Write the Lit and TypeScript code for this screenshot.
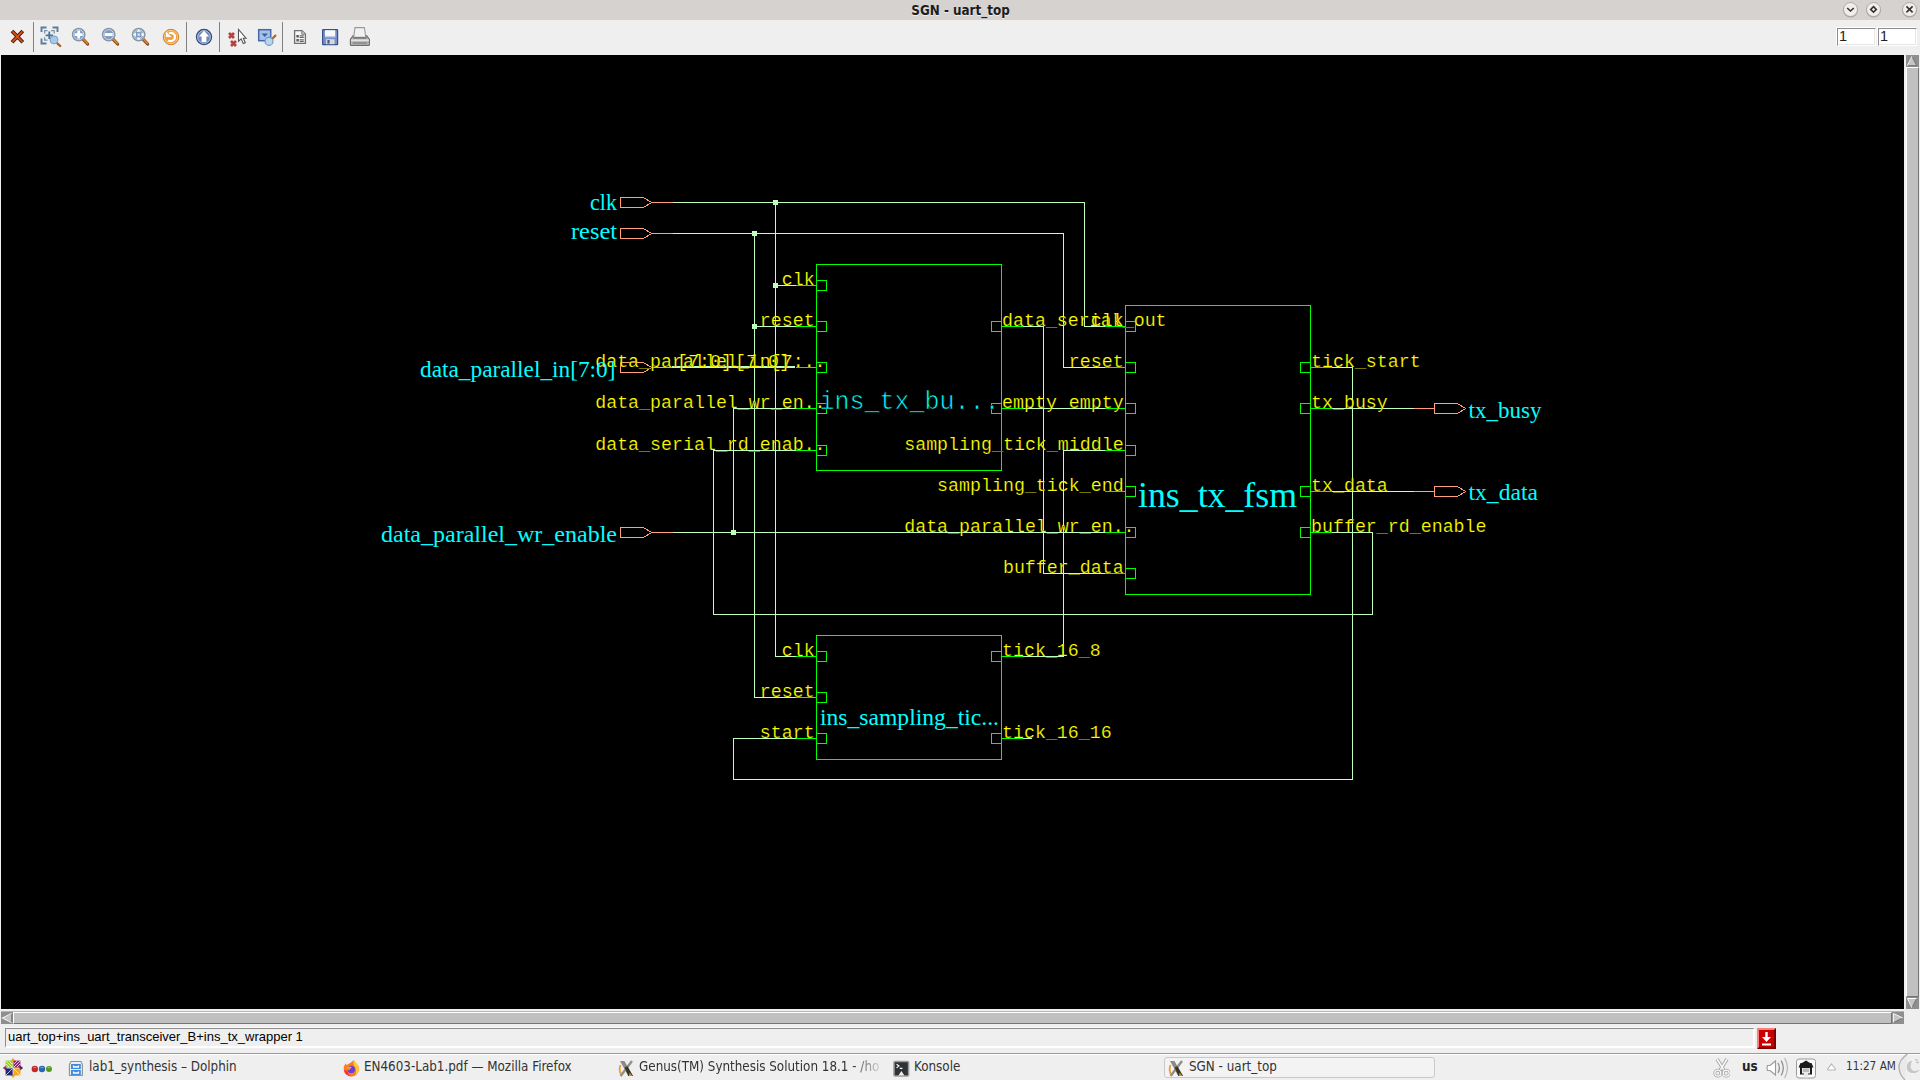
import { LitElement, html, svg, css } from "lit";
import { customElement, property } from "lit/decorators.js";

type Pt = [number, number];
type Side = "start" | "end";

interface Block {
  x: number;
  y: number;
  w: number;
  h: number;
  left: Array<[number, string]>;
  right: Array<[number, string]>;
}

const PITCH = 10.97;
const RIGHT_TRIM = 1.4;

const blocks: Block[] = [
  {
    x: 816, y: 264, w: 185, h: 206,
    left: [[285, "clk"], [326, "reset"], [367, "data_parallel_in[7:.."], [408, "data_parallel_wr_en.."], [450, "data_serial_rd_enab.."]],
    right: [[326, "data_serial_out"], [408, "empty"]],
  },
  {
    x: 1125, y: 305, w: 185, h: 289,
    left: [[326, "clk"], [367, "reset"], [408, "empty"], [450, "sampling_tick_middle"], [491, "sampling_tick_end"], [532, "data_parallel_wr_en.."], [573, "buffer_data"]],
    right: [[367, "tick_start"], [408, "tx_busy"], [491, "tx_data"], [532, "buffer_rd_enable"]],
  },
  {
    x: 816, y: 635, w: 185, h: 124,
    left: [[656, "clk"], [697, "reset"], [738, "start"]],
    right: [[656, "tick_16_8"], [738, "tick_16_16"]],
  },
];

const nets: Pt[][] = [
  [[672, 202], [1084, 202], [1084, 326], [1104, 326]],
  [[672, 233], [1063, 233], [1063, 367], [1104, 367]],
  [[775, 202], [775, 656], [795, 656]],
  [[775, 285], [795, 285]],
  [[754, 233], [754, 697], [795, 697]],
  [[754, 326], [795, 326]],
  [[672, 532], [1104, 532]],
  [[733, 532], [733, 408], [795, 408]],
  [[1022, 326], [1043, 326], [1043, 573], [1104, 573]],
  [[1022, 408], [1104, 408]],
  [[1022, 656], [1063, 656], [1063, 450], [1104, 450]],
  [[1022, 738], [1031, 738]],
  [[1331, 367], [1352, 367], [1352, 779], [733, 779], [733, 738], [795, 738]],
  [[1331, 532], [1372, 532], [1372, 614], [713, 614], [713, 450], [795, 450]],
  [[1331, 408], [1413, 408]],
  [[1331, 491], [1413, 491]],
];

const junctions: Pt[] = [[775, 202], [754, 233], [775, 285], [754, 326], [733, 532]];

const inPorts = [202, 233, 367, 532];
const outPorts = [408, 491];

/** Port and instance names: text, left edge, baseline, drawn width, size. */
const names: Array<[string, number, number, number, number]> = [
  ["clk", 590, 210, 27, 22.5],
  ["reset", 571, 239, 46, 22.5],
  ["data_parallel_in[7:0]", 420, 377, 195.5, 22.5],
  ["data_parallel_wr_enable", 381, 542, 236, 22.5],
  ["tx_busy", 1468.5, 418, 73, 22.5],
  ["tx_data", 1468.5, 500, 69.5, 22.5],
  ["ins_tx_fsm", 1138, 507, 159, 36],
  ["ins_sampling_tic...", 820, 725, 179, 22.5],
];

@customElement("schematic-view")
export class SchematicView extends LitElement {
  static styles = css`
    :host { display: block; width: 1903px; height: 954px; background: #000; }
    svg { display: block; }
    .line { fill: none; stroke-width: 1; shape-rendering: crispEdges; }
    .net { stroke: #beffbe; }
    .pin { stroke: #00ff00; }
    .port { stroke: #ffa07a; }
    .dot { fill: #beffbe; shape-rendering: crispEdges; }
    .label { fill: #ffff00; stroke: #000; stroke-width: 0.2px; font: 18.25px "Liberation Mono", "Courier New", monospace; }
    .name { fill: #00ffff; font-family: "Liberation Serif", "Times New Roman", serif; }
    .mono { fill: #00ffff; stroke: #000; stroke-width: 0.65px; font: 25px "Liberation Mono", "Courier New", monospace; }
  `;

  private path(points: Pt[]) {
    return points.map(([x, y]) => `${x + 0.5},${y + 0.5}`).join(" ");
  }

  private label(text: string, x: number, y: number, side: Side) {
    const shown = Math.min(text.length, 20) * PITCH;
    const left = side === "start" ? x : x - shown;
    return svg`<text class="label" x=${left} y=${y - 0.4} textLength=${text.length * PITCH}>${text}</text>`;
  }

  private block(b: Block) {
    const r = b.x + b.w;
    return svg`
      <rect class="line pin" x=${b.x + 0.5} y=${b.y + 0.5} width=${b.w} height=${b.h}/>
      ${b.left.map(([y]) => svg`
        <polyline class="line pin" points=${this.path([[b.x - 21, y], [b.x, y]])}/>
        <rect class="line pin" x=${b.x + 0.5} y=${y - 4.5} width="10" height="10"/>`)}
      ${b.right.map(([y]) => svg`
        <polyline class="line pin" points=${this.path([[r, y], [r + 21, y]])}/>
        <rect class="line pin" x=${r - 9.5} y=${y - 4.5} width="10" height="10"/>`)}`;
  }

  private blockLabels(b: Block) {
    return svg`
      ${b.left.map(([y, t]) => this.label(t, b.x - RIGHT_TRIM, y, "end"))}
      ${b.right.map(([y, t]) => this.label(t, b.x + b.w + 1, y, "start"))}`;
  }

  private port(x: number, y: number) {
    return svg`<polygon class="line port" points=${this.path([[x, y - 5], [x + 23, y - 5], [x + 31, y], [x + 23, y + 5], [x, y + 5]])}/>`;
  }

  render() {
    return html`<svg width="1903" height="954" viewBox="1 55 1903 954">
      ${inPorts.map((y) => svg`${this.port(620, y)}<polyline class="line port" points=${this.path([[651, y], [672, y]])}/>`)}
      ${outPorts.map((y) => svg`${this.port(1434, y)}<polyline class="line port" points=${this.path([[1413, y], [1434, y]])}/>`)}
      ${blocks.map((b) => this.block(b))}
      <text class="mono" x="819.5" y="408.5" textLength="180">ins_tx_bu...</text>
      ${nets.map((n) => svg`<polyline class="line net" points=${this.path(n)}/>`)}
      <rect class="dot" x="672" y="366" width="123" height="2"/>
      ${junctions.map(([x, y]) => svg`<rect class="dot" x=${x - 2} y=${y - 2} width="5" height="5"/>`)}
      ${blocks.map((b) => this.blockLabels(b))}
      ${this.label("[7:0]", 677, 367, "start")}
      ${this.label("[7:0]", 735, 367, "start")}
      ${names.map(([t, x, y, w, s]) => svg`<text class="name" x=${x} y=${y + 0.2} font-size=${s} textLength=${w} lengthAdjust="spacingAndGlyphs">${t}</text>`)}
    </svg>`;
  }
}

const lens = svg`
  <path d="M13.2 13.4L17.6 18" stroke="#8a4513" stroke-width="3.2" stroke-linecap="round"/>
  <path d="M13.4 13.2L17.4 17.4" stroke="#e08a2c" stroke-width="1.5" stroke-linecap="round"/>
  <circle cx="8.7" cy="8.6" r="6.2" fill="#7d9cc0" stroke="#8793a1" stroke-width="1.4"/>
  <circle cx="8.7" cy="8.6" r="5" fill="none" stroke="#c9d9ea" stroke-width="1"/>`;

const icons: Record<string, unknown> = {
  close: svg`
    <path d="M5 5L15.8 16.2M15.8 5L5 16.2" stroke="#4f1c04" stroke-width="3.8"/>
    <path d="M5.4 5.4L15.4 15.8M15.4 5.4L5.4 15.8" stroke="#d8501a" stroke-width="1.8"/>`,
  fit: svg`
    <path d="M1.5 6V1.5H6.5M12.5 1.5H17.5V6M1.5 12.5V17.5H6.5" fill="none" stroke="#5c7d99" stroke-width="1.9"/>
    <path d="M4.6 7.6V4.6H7.6M11 4.6H14.2V7.6M4.6 11.2V14.2H7.6" fill="none" stroke="#7a97ae" stroke-width="1.3"/>
    <path d="M9.3 5.5V13M5.6 9.3H13" stroke="#4b7396" stroke-width="1.8"/>
    <path d="M16.8 16.8L20.2 20" stroke="#a8662a" stroke-width="2.4" stroke-linecap="round"/>
    <circle cx="14" cy="13.9" r="4" fill="#a5c9ec" stroke="#7ba0c4"/>`,
  zoomIn: svg`${lens}<path d="M8.7 4.6V12.6M4.7 8.6H12.7" stroke="#fff" stroke-width="2.8"/>`,
  zoomOut: svg`${lens}<path d="M4.7 8.6H12.7" stroke="#fff" stroke-width="3"/>`,
  zoomFull: svg`${lens}
    <path d="M8.7 3.2L11 5.8H6.4ZM8.7 14L6.4 11.4H11ZM3.3 8.6L5.9 6.3V10.9ZM14.1 8.6L11.5 6.3V10.9Z" fill="#fff"/>
    <rect x="7.5" y="7.4" width="2.4" height="2.4" fill="#dbe7f3"/>`,
  redraw: svg`
    <circle cx="11" cy="11" r="7.7" fill="#f3a040" stroke="#cf8226" stroke-width="1"/>
    <circle cx="11" cy="11" r="6.7" fill="none" stroke="#f9d29c" stroke-width=".8"/>
    <path d="M9 7.2C12.4 6 15.4 8.2 15 11.4C14.6 14.8 11 16.2 8 14.4" fill="none" stroke="#fff" stroke-width="2.2"/>
    <path d="M6 5.6V11H11.4Z" fill="#fff"/>`,
  up: svg`
    <circle cx="11" cy="11" r="7.5" fill="#7088b8" stroke="#344c82" stroke-width="1.4"/>
    <circle cx="11" cy="11" r="6.4" fill="none" stroke="#bccae2" stroke-width=".9"/>
    <path d="M11 4.8L16.2 10.6H13.4V16H8.6V10.6H5.8Z" fill="#fff"/>`,
  deselect: svg`
    <path d="M3 7L8 12M8 7L3 12M5 15L10 20M10 15L5 20" stroke="#b8403f" stroke-width="2.7"/>
    <path d="M12.5 3.5V15.2L15.2 12.8L17.3 17.6L19.3 16.8L17.3 12.2H20Z" fill="#fff" stroke="#555" stroke-width="1.1"/>`,
  region: svg`
    <rect x="2.7" y="3.7" width="12" height="11" fill="#a7c1e8" stroke="#4468ac" stroke-width="1.5"/>
    <path d="M5.5 7.5L8.8 11L12 7.5Z" fill="#3560a8"/>
    <path d="M16 13L19.4 9.6" stroke="#b9651b" stroke-width="2.2" stroke-linecap="round"/>
    <circle cx="13" cy="15.4" r="4" fill="#b6d5f1" stroke="#6f95be" stroke-width="1.1"/>`,
  report: svg`
    <path d="M5.6 4.6H13L16.4 8V17.4H5.6Z" fill="#f7f7f7" stroke="#6f6f6f" stroke-width="1.3"/>
    <path d="M12.8 4.6V8.2H16.4" fill="#ccc" stroke="#777" stroke-width="1"/>
    <path d="M7.4 10.3H9.8M7.4 14.3H9.8" stroke="#555" stroke-width="2.6"/>
    <path d="M10.6 9.7H14.8M10.6 11.4H14.8M10.6 13.7H14.8M10.6 15.4H14.8" stroke="#666" stroke-width="1.1"/>`,
  save: svg`
    <rect x="3.6" y="3.6" width="15" height="15" rx=".6" fill="#7791c8" stroke="#384f8e" stroke-width="1.2"/>
    <rect x="6" y="4.2" width="10.2" height="7" fill="#f6f8fc"/>
    <path d="M6 10.6H16.2" stroke="#b7c3df" stroke-width="1"/>
    <rect x="7" y="13.2" width="8.6" height="5" fill="#d6d8dc"/>
    <rect x="8.4" y="14" width="2.2" height="3.6" fill="#405894"/>`,
  print: svg`
    <path d="M4.2 9.6H17.6L20.4 13.4V18.4Q20.4 19.4 19.4 19.4H2.4Q1.4 19.4 1.4 18.4V13.4Z" fill="#bdbdbd" stroke="#6f6f6f" stroke-width="1.2"/>
    <path d="M6 1.6H15.4L16.8 11.4H4.6Z" fill="#f1f1f1" stroke="#9a9a9a" stroke-width="1.1"/>
    <path d="M4.2 12H17.6" stroke="#666" stroke-width="1.2"/>
    <path d="M2 14.2H20" stroke="#f4f4f4" stroke-width="1"/>
    <path d="M3.6 17H18.2" stroke="#808080" stroke-width="1.4"/>`,
};

const toolGroups: string[][] = [
  ["close"],
  ["fit", "zoomIn", "zoomOut", "zoomFull", "redraw"],
  ["up"],
  ["deselect", "region"],
  ["report", "save", "print"],
];

@customElement("tool-bar")
export class ToolBar extends LitElement {
  static styles = css`
    :host { display: flex; align-items: flex-start; height: 35px; background: #efefef; }
    .group { display: flex; gap: 8px; padding: 6px 4px 0 6px; }
    .group.first { padding-left: 7px; }
    .sep { width: 1px; height: 30px; margin-top: 2px; background: #828282; }
    .space { flex: 1; }
    .fields { display: flex; gap: 2px; padding: 8px 3px 0 0; }
    .field {
      box-sizing: border-box; width: 39px; height: 18px; background: #fff; color: #222;
      border: 1px solid #fff; border-top-color: #8d8d8d; border-left-color: #8d8d8d; box-shadow: -1px -1px #fff, inset -1px -1px #e6e6e6;
      padding-left: 1px; font: 14.5px/14px "Liberation Sans", Arial, sans-serif;
    }
  `;

  render() {
    return html`
      ${toolGroups.map((g, i) => html`
        ${i ? html`<div class="sep"></div>` : ""}
        <div class="group ${i ? "" : "first"}">
          ${g.map((n) => html`<svg width="22" height="22" viewBox="0 0 22 22" fill="none">${icons[n]}</svg>`)}
        </div>`)}
      <div class="space"></div>
      <div class="fields"><div class="field">1</div><div class="field">1</div></div>`;
  }
}

@customElement("title-bar")
export class TitleBar extends LitElement {
  static styles = css`
    :host {
      display: grid; grid-template-columns: 1fr auto 1fr; height: 20px; background: #d6d2cf;
      font: bold 13.3px/21px "DejaVu Sans Condensed", "DejaVu Sans", sans-serif; font-stretch: condensed; color: #1d1d1d;
    }
    .title { grid-column: 2; padding-left: 1px; text-shadow: 0 1px #eee; }
    .buttons { display: flex; justify-content: flex-end; padding: 1px 2px 0 0; }
    .gap { width: 19px; }
    .first { margin-right: 6px; }
  `;

  private button(mark: string, cls = "") {
    return html`<svg class=${cls} width="17" height="18" viewBox="0 0 17 18">
      <circle cx="8.5" cy="9.3" r="7.3" fill="#aaa7a5"/>
      <circle cx="8.5" cy="8.5" r="7" fill="#efeeed" stroke="#a19e9c" stroke-width=".8"/>
      <path d=${mark} fill="none" stroke="#333" stroke-width="1.6"/>
    </svg>`;
  }

  render() {
    return html`<div class="title">SGN - uart_top</div>
      <div class="buttons">
        ${this.button("M5.2 7L8.5 10L11.8 7", "first")}
        ${this.button("M8.5 5.6L11.3 8.4L8.5 11.2L5.7 8.4Z")}
        <div class="gap"></div>
        ${this.button("M5.4 5.4L11.6 11.4M11.6 5.4L5.4 11.4")}
      </div>`;
  }
}

@customElement("scroll-bar")
export class ScrollBar extends LitElement {
  @property({ reflect: true }) axis: "x" | "y" = "x";

  static styles = css`
    :host { display: flex; box-sizing: border-box; background: #8f8f8f; }
    :host([axis="y"]) { flex-direction: column; width: 13px; height: 954px; }
    :host([axis="x"]) { width: 1903px; height: 13px; border-top: 1px solid #b5b5b5; }
    .thumb {
      flex: 1; background: #c0c0c0; box-sizing: border-box;
      border: 1px solid #fff; border-right-color: #757575; border-bottom-color: #757575;
    }
    svg { display: block; flex: none; }
  `;

  render() {
    const arrow = (first: boolean) => {
      const turn = this.axis === "x" ? (first ? -90 : 90) : first ? 0 : 180;
      const lit = this.axis === "x" ? (first ? "M1.5 11.5L6.5 1.5L11.5 11.5" : "M1.5 11.5H11.5M1.5 11.5L6.5 1.5") : first ? "M1.5 11.5L6.5 1.5" : "M11.5 11.5H1.5M11.5 11.5L6.5 1.5";
      return html`<svg width="12" height="12" viewBox="0 0 13 13">
        <g transform="rotate(${turn} 6.5 6.5)">
          <path d="M6.5 1.5L11.5 11.5H1.5Z" fill="#c4c4c4" stroke="#666" stroke-width=".8"/>
          <path d=${lit} fill="none" stroke="#fff" stroke-width="1.1"/>
        </g></svg>`;
    };
    return html`${arrow(true)}<div class="thumb"></div>${arrow(false)}`;
  }
}

const xLogo = svg`
  <path d="M2.5 5C1 9 1.6 13 4 15.4" fill="none" stroke="#f49a2a" stroke-width="1.8"/>
  <path d="M14 1L2.6 16" stroke="#8f8f8f" stroke-width="2.4"/>
  <path d="M2 1H6.4L15 16H10.4Z" fill="#8d8a86"/>
  <path d="M6.6 7.4L9.4 6.2L15 16H10.4Z" fill="#39341f"/>
  <path d="M11.5 12.5L14.4 16H11Z" fill="#c99a2a"/>`;

const appIcons: Record<string, unknown> = {
  files: svg`
    <path d="M3 1.5H13L14.4 4.5V15.5H1.4V4.5Z" fill="#eceff1" stroke="#8c9195" stroke-width="1.1"/>
    <rect x="3" y="4" width="9.8" height="5" fill="#3d8ade"/><rect x="3" y="10" width="9.8" height="5" fill="#3d8ade"/>
    <path d="M5.6 5.4V7H10.4V5.4M5.6 11.4V13H10.4V11.4" fill="none" stroke="#fff" stroke-width="1.4"/>`,
  firefox: svg`
    <path d="M8 2.6Q9.2 .8 11 .2Q11.4 2 13.6 3.8Q16.6 6.8 15.8 10.4Q14.4 16 8.6 16.4Q2.4 16.4 .8 10.6Q.2 6.4 2.4 3.6L3.6 5Z" fill="#ff7a1f"/>
    <path d="M11 .2Q11.4 2 13.6 3.8Q16.6 6.8 15.8 10.4Q14.8 13.6 12.4 15Q14.2 9 11.2 6Q9.4 3 11 .2Z" fill="#ffcb2e"/>
    <path d="M1 10Q2 16 8.6 16.4Q5 15 4.4 11Z" fill="#f2304c"/>
    <circle cx="8.3" cy="9.4" r="3.7" fill="#6a3fd0"/>
    <path d="M3.4 7.2Q6.8 5.6 9 8Q6.6 8 6.4 10.2Q4 9.8 3.4 7.2Z" fill="#ff9a2a"/>`,
  x: xLogo,
  konsole: svg`
    <rect x="1" y="1.4" width="14.6" height="14.6" rx="1" fill="#2e3234" stroke="#9a9a9a" stroke-width="1.5"/>
    <path d="M3.6 4.2L6 6L3.6 7.8M6.8 8.4H9.4" fill="none" stroke="#fff" stroke-width="1.1"/>
    <path d="M5.4 15.4L8.4 11L11.4 15.4Z" fill="#eee"/>`,
};

const tasks = [
  { icon: "files", label: "lab1_synthesis – Dolphin", width: 275, state: "" },
  { icon: "firefox", label: "EN4603-Lab1.pdf — Mozilla Firefox", width: 275, state: "" },
  { icon: "x", label: "Genus(TM) Synthesis Solution 18.1 - /ho", width: 275, state: "faded" },
  { icon: "konsole", label: "Konsole", width: 275, state: "" },
  { icon: "x", label: "SGN - uart_top", width: 271, state: "active" },
];

@customElement("task-bar")
export class TaskBar extends LitElement {
  static styles = css`
    :host {
      display: flex; align-items: flex-start; box-sizing: border-box; height: 27px; border-top: 1px solid #9a9c9a;
      box-shadow: inset 0 1px #fff; background: #efefef; color: #333; overflow: hidden;
      font: 13.3px/20px "DejaVu Sans Condensed", "DejaVu Sans", sans-serif; font-stretch: condensed;
    }
    svg { display: block; flex: none; }
    .launch { display: flex; width: 64px; gap: 7px; padding: 4px 0 0 3px; box-sizing: border-box; }
    .task { display: flex; gap: 4px; height: 21px; box-sizing: border-box; margin-top: 3px; padding: 1px 0 0 4px; line-height: 18px; white-space: nowrap; }
    .task svg { margin-top: 2px; }
    .active { border: 1px solid #c9c9c9; border-radius: 3px; background: #f3f3f3; padding: 0 0 0 3px; }
    .faded .text { -webkit-mask-image: linear-gradient(90deg, #000 212px, transparent 246px); mask-image: linear-gradient(90deg, #000 212px, transparent 246px); }
    .tray { display: flex; margin-left: auto; height: 26px; align-items: center; }
    .scissors { margin-right: 3px; }
    .layout { font-weight: bold; font-size: 13.4px; line-height: 24px; padding: 0 4px 0 9px; width: 18px; color: #222; }
    .clock { width: 52px; padding-left: 8px; font-size: 11.7px; line-height: 25px; height: 26px; white-space: nowrap; }
  `;

  render() {
    return html`
      <div class="launch">
        <svg width="20" height="20" viewBox="0 0 20 20">
          <path d="M10 0L13 3.6H7ZM20 10L16.4 13V7ZM10 20L7 16.4H13ZM0 10L3.6 7V13Z" fill="#efa724"/>
          <path d="M0 10L3.6 7V13Z" fill="#932279"/><path d="M20 10L16.4 13V7Z" fill="#262577"/>
          <rect x="2.6" y="2.6" width="7" height="7" fill="#9ccd2a"/><rect x="10.4" y="2.6" width="7" height="7" fill="#932279"/>
          <rect x="2.6" y="10.4" width="7" height="7" fill="#262577"/><rect x="10.4" y="10.4" width="7" height="7" fill="#efa724"/>
          <path d="M3 3L9 9M17 3L11 9M3 17L9 11M17 17L11 11M6 3L9 6M3 6L6 9M14 3L11 6M17 6L14 9" stroke="#fff" stroke-width=".7"/>
        </svg>
        <svg width="22" height="20" viewBox="0 0 22 20">
          <circle cx="4.8" cy="11" r="3.2" fill="#c02a26"/><circle cx="12" cy="11" r="3.2" fill="#2a66b4"/><circle cx="19" cy="11" r="3" fill="#57991c"/>
          <path d="M3.4 9.6H6.2M10.6 9.6H13.4M17.6 9.6H20.4" stroke="#fff" stroke-opacity=".45"/>
        </svg>
      </div>
      ${tasks.map((t) => html`
        <div class="task ${t.state}" style="width:${t.width}px">
          <svg width="17" height="17" viewBox="0 0 17 17">${appIcons[t.icon]}</svg>
          <span class="text">${t.label}</span>
        </div>`)}
      <div class="tray">
        <svg class="scissors" width="20" height="22" viewBox="-2 -1 20 22">
          <path d="M5 2L12 13.4M15 2L8 13.4" stroke="#a5a5a5" stroke-width="3.4"/>
          <path d="M5 2L12 13.4M15 2L8 13.4" stroke="#fafafa" stroke-width="1.6"/>
          <circle cx="5.8" cy="16.2" r="3" fill="none" stroke="#a5a5a5" stroke-width="2.8"/><circle cx="14.2" cy="16.2" r="3" fill="none" stroke="#a5a5a5" stroke-width="2.8"/>
          <circle cx="5.8" cy="16.2" r="3" fill="none" stroke="#fafafa" stroke-width="1.2"/><circle cx="14.2" cy="16.2" r="3" fill="none" stroke="#fafafa" stroke-width="1.2"/>
        </svg>
        <div class="layout">us</div>
        <svg width="26" height="24" viewBox="-2 -1 26 24" fill="none">
          <path d="M1.5 9.5H4L9.5 5V19L4 14.5H1.5Q.5 12 1.5 9.5Z" fill="#fff" stroke="#999" stroke-width="1.1"/>
          <path d="M12 7Q14.8 12 12 17M15.2 4.6Q19.4 12 15.2 19.4" stroke="#8f8f8f" stroke-width="1.3"/>
          <path d="M18.6 2.2Q24.4 12 18.6 21.8" stroke="#bbb" stroke-width="1.3"/>
        </svg>
        <svg width="30" height="24" viewBox="-1 -1.5 30 24">
          <rect x="5.5" y="2.5" width="19" height="19" rx="2.5" fill="#fafafa" stroke="#999"/>
          <path d="M15 4L19 6.5H20.5L22.5 11H21V18H9V11H7.5L9.5 6.5H11Z" fill="#1c1c1c"/>
          <path d="M11 11.5H19V17H17V21H13V17H11Z" fill="#e9e9e9"/><path d="M13 12V15.5M15 12V15.5M17 12V15.5" stroke="#777" stroke-width=".8"/>
        </svg>
        <svg width="18" height="24" viewBox="-1 -1 18 24"><path d="M10.5 8L14.4 13Q14.8 14 13.6 14H7.4Q6.2 14 6.6 13Z" fill="#fff" stroke="#b5b5b5" stroke-width="1.1"/></svg>
        <div class="clock">11:27 AM</div>
        <svg width="22" height="26" viewBox="0 0 22 26">
          <path d="M9.5 0Q1 6 1 13Q1 20 7 26" fill="#e9e9e9" stroke="#b0b0b0" stroke-width="1.3"/>
          <path d="M15 6Q8.6 7 8.2 12.4Q8.2 19.6 15.4 19.6Q21 19.6 22 14.6Q17 18 14.2 15.6Q11.6 12.8 15 6Z" fill="#c6c6c6" stroke="#f6f6f6" stroke-width=".8"/>
          <path d="M17 5.5L20 6.6M18 8.4L21 8.6" stroke="#c2c2c2" stroke-width="1.2"/>
        </svg>
      </div>`;
  }
}

@customElement("app-root")
export class AppRoot extends LitElement {
  static styles = css`
    :host { display: flex; flex-direction: column; width: 1920px; height: 1080px; overflow: hidden; background: #efefef; }
    .work { display: grid; grid-template-columns: 1903px 13px; grid-template-rows: 954px 13px; gap: 2px; padding-left: 1px; }
    .status { display: flex; align-items: flex-start; gap: 2px; height: 25px; padding: 4px 0 0 5px; flex: 1; }
    .entry {
      box-sizing: border-box; width: 1750px; height: 20px; background: #efefef; color: #000; padding-left: 2px;
      border: 1px solid #8d8d8d; border-right: 2px solid #fff; border-bottom: 2px solid #fff; box-shadow: 0 -1px #fafafa;
      font: 13px/16px "Liberation Sans", Arial, sans-serif;
    }
    .pull { box-sizing: border-box; width: 19px; height: 21px; border: 2px solid; border-color: #ff7f7f #7c0000 #7c0000 #ff7f7f; background: #c80000; }
    .pull svg { display: block; }
    title-bar, tool-bar, task-bar { flex: none; }
  `;

  render() {
    return html`
      <title-bar></title-bar>
      <tool-bar></tool-bar>
      <div class="work">
        <schematic-view></schematic-view>
        <scroll-bar axis="y"></scroll-bar>
        <scroll-bar axis="x"></scroll-bar>
      </div>
      <div class="status">
        <div class="entry">uart_top+ins_uart_transceiver_B+ins_tx_wrapper 1</div>
        <div class="pull"><svg width="15" height="17" viewBox="0 0 15 17">
          <path d="M6.3 2H8.7V7H12L7.5 12L3 7H6.3ZM3 13.4H12V15.4H3Z" fill="#fff"/></svg></div>
      </div>
      <task-bar></task-bar>`;
  }
}
